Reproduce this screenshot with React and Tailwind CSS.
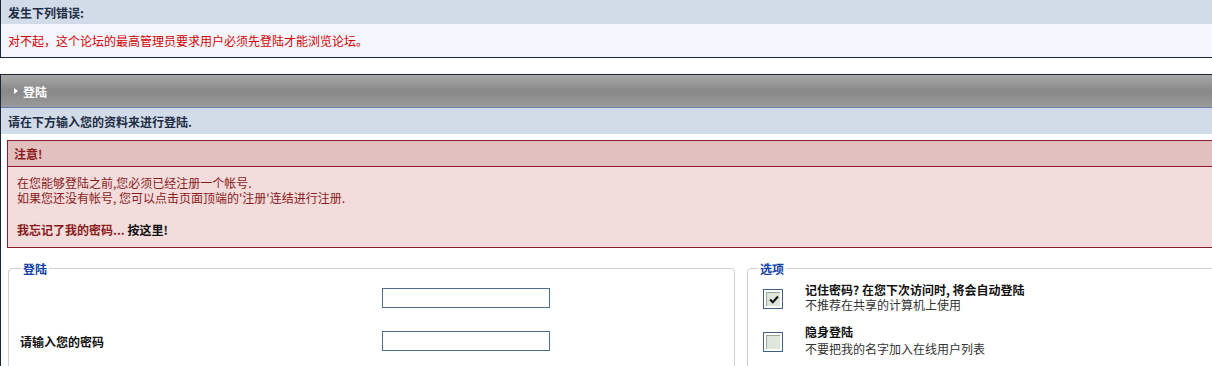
import React from 'react';

const font = "font-['Noto_Sans_CJK_SC','Noto_Sans',sans-serif]";

const Check = ({ checked }) => (
  <div className="w-[20px] h-[20px] border border-[#3e5f8a] bg-white p-[2px] shrink-0">
    <div className="w-full h-full bg-[#dfe6dc] border-t border-l border-[#9aa59a] flex items-center justify-center">
      {checked && (
        <svg width="10" height="9" viewBox="0 0 10 9">
          <path d="M1 4.5 L3.8 7.2 L9 1.5" stroke="#111" strokeWidth="2" fill="none" />
        </svg>
      )}
    </div>
  </div>
);

export default function App() {
  return (
    <div className={`w-[1212px] h-[366px] overflow-hidden bg-white text-[12px] leading-[15px] ${font}`}>
      <div className="w-[1240px]">
        {/* error box */}
        <div className="border-l border-b border-[#1b2636]">
          <div className="h-[24px] bg-[#d1dce8] pl-[7px] flex items-center font-bold text-[#1e2c45]">发生下列错误:</div>
          <div className="h-[33px] bg-[#f3f7fd] pl-[7px] flex items-center text-[#d40000]">
            对不起，这个论坛的最高管理员要求用户必须先登陆才能浏览论坛。
          </div>
        </div>

        <div className="h-[16px]" />

        {/* login box */}
        <div className="border-l border-t border-[#1b2636] h-[300px]">
          <div className="h-[33px] bg-gradient-to-b from-[#a8a8a8] via-[#888888] to-[#9a9a9a] border-b border-[#6b7bb5] flex items-center pl-[13px] gap-[5px] text-white font-bold">
            <svg width="4" height="6" viewBox="0 0 4 6"><path d="M0 0 L4 3 L0 6 Z" fill="#fff" /></svg>
            <span>登陆</span>
          </div>
          <div className="h-[26px] bg-[#d1dce8] pl-[7px] flex items-center font-bold text-[#1e2c45]">请在下方输入您的资料来进行登陆.</div>

          <div className="pl-[6px] pt-[6px]">
            <div className="border border-[#8b1c2b] border-r-0">
              <div className="h-[26px] bg-[#e2c0c0] border-b border-[#8b1c2b] pl-[6px] flex items-center font-bold text-[#8b1a1a]">注意!</div>
              <div className="h-[80px] bg-[#f2dcdc] pl-[9px] pt-[8px] text-[#8b1a1a]">
                <div>在您能够登陆之前,您必须已经注册一个帐号.</div>
                <div>如果您还没有帐号, 您可以点击页面顶端的'注册'连结进行注册.</div>
                <div className="mt-[17px] font-bold">
                  我忘记了我的密码... <span className="text-[#111]">按这里!</span>
                </div>
              </div>
            </div>
          </div>

          <div className="flex gap-[12px] pl-[7px] pt-[13px]">
            <fieldset className="w-[727px] h-[120px] border border-[#cfcfcf] rounded-[4px] px-[11px]">
              <legend className="px-[2px] ml-[1px] font-bold text-[#1040a8]">登陆</legend>
              <div className="flex flex-col gap-[23px] pt-[12px]">
                <div className="flex items-center h-[20px]">
                  <div className="w-[362px]" />
                  <div className="w-[168px] h-[20px] border border-[#4d6d94] bg-white" />
                </div>
                <div className="flex items-center h-[20px]">
                  <div className="w-[362px] font-bold text-[#111]">请输入您的密码</div>
                  <div className="w-[168px] h-[20px] border border-[#4d6d94] bg-white" />
                </div>
              </div>
            </fieldset>
            <fieldset className="flex-1 h-[120px] border border-[#cfcfcf] rounded-[4px] pl-[15px]">
              <legend className="px-[2px] -ml-[5px] font-bold text-[#1040a8]">选项</legend>
              <div className="flex flex-col gap-[23px] pt-[13px]">
                <div className="flex gap-[22px] items-start h-[20px]">
                  <Check checked />
                  <div className="-mt-[7px]">
                    <div className="font-bold text-[#111]">记住密码? 在您下次访问时, 将会自动登陆</div>
                    <div className="text-[#333]">不推荐在共享的计算机上使用</div>
                  </div>
                </div>
                <div className="flex gap-[22px] items-start h-[20px]">
                  <Check />
                  <div className="-mt-[8px]">
                    <div className="font-bold text-[#111] mb-[2px]">隐身登陆</div>
                    <div className="text-[#333]">不要把我的名字加入在线用户列表</div>
                  </div>
                </div>
              </div>
            </fieldset>
          </div>
        </div>
      </div>
    </div>
  );
}
